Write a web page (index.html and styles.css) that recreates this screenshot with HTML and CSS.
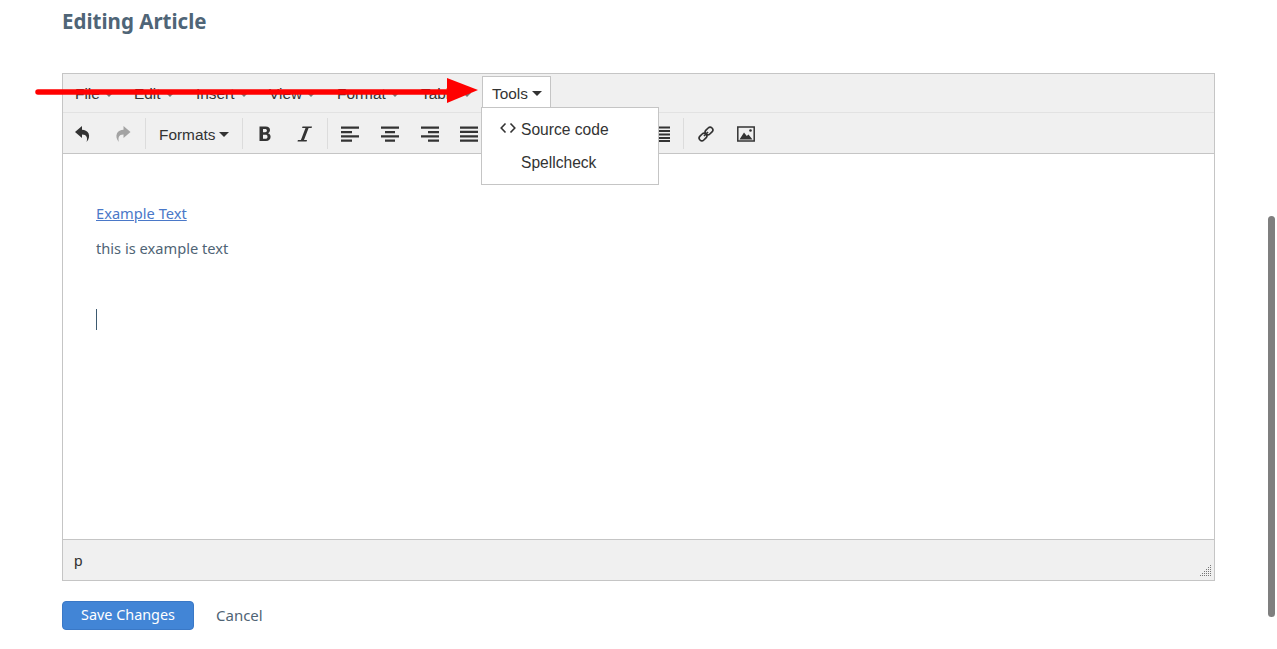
FILE: index.html
```html
<!DOCTYPE html>
<html lang="en">
<head>
<meta charset="utf-8">
<title>Editing Article</title>
<link rel="stylesheet" href="styles.css">
</head>
<body>
<main class="page">
  <h1 class="title">Editing Article</h1>
  <div class="editor">
    <div class="menubar">
      <span class="menu-item mi-file">File<i class="caret"></i></span>
      <span class="menu-item mi-edit">Edit<i class="caret"></i></span>
      <span class="menu-item mi-insert">Insert<i class="caret"></i></span>
      <span class="menu-item mi-view">View<i class="caret"></i></span>
      <span class="menu-item mi-format">Format<i class="caret"></i></span>
      <span class="menu-item mi-table">Table<i class="caret"></i></span>
      <span class="menu-item mi-tools">Tools<i class="caret dark"></i>
        <div class="dropdown">
          <div class="dd-row"><svg class="dd-icon" viewBox="0 0 16 12"><path d="M5.500 1.500 1.200 6l4.300 4.500M10.500 1.500 14.800 6l-4.300 4.500" fill="none" stroke="#333" stroke-width="1.600"/></svg><span>Source code</span></div>
          <div class="dd-row"><span class="dd-blank"></span><span>Spellcheck</span></div>
        </div>
      </span>
    </div>
    <div class="toolbar">
      <button class="tb"><svg viewBox="0 0 18 18"><path d="M8 1 1 7l7 6V9.500c2.500 0 4 .8 4.700 2.500.5 1.500.4 3.300-.2 5 2.500-2.500 3.300-6 2-8.800C13.200 6 10.800 4.800 8 4.700z" fill="#333"/></svg></button>
      <button class="tb"><svg viewBox="0 0 18 18"><path d="M9.500 1 16.500 7l-7 6V9.500c-2.500 0-4 .8-4.700 2.500-.5 1.500-.4 3.300.2 5-2.500-2.500-3.300-6-2-8.800C4.300 6 6.700 4.800 9.500 4.700z" fill="#a3a3a3"/></svg></button>
      <i class="sep"></i>
      <button class="tb-formats">Formats<i class="caret dark"></i></button>
      <i class="sep"></i>
      <button class="tb"><svg viewBox="0 0 18 18"><path fill-rule="evenodd" d="M3.500 1.500h6.300c2.700 0 4.200 1.400 4.200 3.600 0 1.500-.8 2.700-2.100 3.100 1.700.4 2.700 1.700 2.700 3.500 0 2.600-1.700 4.300-4.600 4.300H3.500zM7 4v3.300h2.100c1.200 0 1.800-.6 1.800-1.700S10.300 4 9.100 4zM7 9.700v4.100h2.400c1.400 0 2.100-.6 2.100-2.100S10.800 9.700 9.400 9.700z" fill="#333"/></svg></button>
      <button class="tb"><svg viewBox="0 0 18 18"><path d="M6.500 1.500h9.500l-.4 1.400h-3L8 15h3l-.4 1.500H1.500l.4-1.500h3L9.500 2.900h-3.400z" fill="#333"/></svg></button>
      <i class="sep"></i>
      <button class="tb"><svg viewBox="0 0 18 18"><path d="M0 1.500h18v2.300H0zM0 6h11v2.300H0zM0 10.200h18v2.300H0zM0 14.500h11v2.300H0z" fill="#333"/></svg></button>
      <button class="tb"><svg viewBox="0 0 18 18"><path d="M0 1.500h18v2.300H0zM4 6h10v2.300H4zM0 10.200h18v2.300H0zM4 14.500h10v2.300H4z" fill="#333"/></svg></button>
      <button class="tb tb-tight"><svg viewBox="0 0 18 18"><path d="M0 1.500h18v2.300H0zM7 6h11v2.300H7zM0 10.200h18v2.300H0zM7 14.500h11v2.300H7z" fill="#333"/></svg></button>
      <button class="tb"><svg viewBox="0 0 18 18"><path d="M0 1.500h18v2.300H0zM0 5.800h18v2.300H0zM0 10.200h18v2.300H0zM0 14.500h18v2.300H0z" fill="#333"/></svg></button>
      <i class="sep"></i>
      <button class="tb split"><svg viewBox="0 0 18 18"><path d="M0 2h18v2H0zM0 6h18v2H0zM0 10h18v2H0zM0 14h18v2H0z" fill="#333"/></svg></button>
      <button class="tb split-b"><svg viewBox="0 0 18 18"><path d="M0 2h18v2H0zM0 6h18v2H0zM0 10h18v2H0zM0 14h18v2H0z" fill="#333"/></svg></button>
      <i class="sep"></i>
      <button class="tb"><svg viewBox="0 0 18 18"><path d="M0 2h18v2H0zM0 6h18v2H0zM0 10h18v2H0zM0 14h18v2H0z" fill="#333"/></svg></button>
      <button class="tb"><svg viewBox="0 0 18 18"><path d="M0 1.500h18v2H0zM6 5h12v2H6zM6 8.500h12v2H6zM6 12h12v2H6zM6 15h12v2H6z" fill="#333"/></svg></button>
      <i class="sep"></i>
      <button class="tb"><svg viewBox="0 0 18 18"><g fill="none" stroke="#333" stroke-width="1.700" transform="rotate(-45 9 9)"><rect x="0.500" y="6.300" width="8.500" height="5.400" rx="2.700"/><rect x="9" y="6.300" width="8.500" height="5.400" rx="2.700"/></g><path d="M7 11 11 7" stroke="#333" stroke-width="1.700"/></svg></button>
      <button class="tb"><svg viewBox="0 0 18 16"><rect x="0.800" y="1" width="16.400" height="14" fill="none" stroke="#333" stroke-width="1.500"/><path d="M2.500 13.500 7 6.500l2.800 3.500 1.700-1.500 4 5z" fill="#333"/><circle cx="13.500" cy="4.500" r="1.300" fill="#333"/></svg></button>
    </div>
    <div class="content">
      <p class="para"><a class="link">Example Text</a></p>
      <p class="para">this is example text</p>
      <i class="cursor"></i>
    </div>
    <div class="statusbar">
      <span>p</span>
      <svg class="grip" viewBox="0 0 12 12"><g fill="#777"><rect x="10" y="0" width="1" height="1"/><rect x="10" y="2" width="1" height="1"/><rect x="10" y="4" width="1" height="1"/><rect x="10" y="6" width="1" height="1"/><rect x="10" y="8" width="1" height="1"/><rect x="10" y="10" width="1" height="1"/><rect x="8" y="2" width="1" height="1"/><rect x="8" y="4" width="1" height="1"/><rect x="8" y="6" width="1" height="1"/><rect x="8" y="8" width="1" height="1"/><rect x="8" y="10" width="1" height="1"/><rect x="6" y="4" width="1" height="1"/><rect x="6" y="6" width="1" height="1"/><rect x="6" y="8" width="1" height="1"/><rect x="6" y="10" width="1" height="1"/><rect x="4" y="6" width="1" height="1"/><rect x="4" y="8" width="1" height="1"/><rect x="4" y="10" width="1" height="1"/><rect x="2" y="8" width="1" height="1"/><rect x="2" y="10" width="1" height="1"/><rect x="0" y="10" width="1" height="1"/></g></svg>
    </div>
  </div>
  <div class="actions">
    <button class="save">Save Changes</button>
    <a class="cancel">Cancel</a>
  </div>
</main>
<svg class="arrow" viewBox="0 0 1277 649"><path d="M38 92H450" stroke="#f00" stroke-width="5.500" stroke-linecap="round"/><path d="M447 78 478 90 447 103z" fill="#f00"/></svg>
<div class="scroll-thumb"></div>
</body>
</html>
```
FILE: styles.css
```css
* { box-sizing: border-box; }
html, body { margin: 0; height: 649px; overflow: hidden; background: #fff; }
body { font-family: "Noto Sans", sans-serif; color: #4f6475; }
.page { padding: 0 62px; }
.title { margin: 0; padding-top: 7px; height: 73px; font-size: 20.500px; line-height: 28px; font-weight: 700; color: #4f6577; }
.editor { height: 508px; border: 1px solid #c5c5c5; display: flex; flex-direction: column; font-family: "Liberation Sans", sans-serif; color: #333; }
.menubar { height: 39px; background: #f0f0f0; border-bottom: 1px solid #e2e2e2; position: relative; font-size: 15.400px; }
.menu-item { position: absolute; top: 3px; height: 36px; line-height: 34px; white-space: nowrap; color: #333; }
.mi-file { left: 12px; } .mi-edit { left: 71px; } .mi-insert { left: 133px; } .mi-view { left: 206px; } .mi-format { left: 274px; } .mi-table { left: 358px; }
.mi-tools { top: 2px; height: 37px; left: 419px; width: 69px; padding-left: 9px; background: #fff; border: 1px solid #c5c5c5; border-bottom: 0; line-height: 33px; z-index: 2; }
.caret { display: inline-block; width: 0; height: 0; margin-left: 5px; vertical-align: 2px; border-left: 4.500px solid transparent; border-right: 4.500px solid transparent; border-top: 4.500px solid #777; }
.caret.dark { border-top-color: #333; margin-left: 4px; vertical-align: 3px; border-left-width: 5px; border-right-width: 5px; border-top-width: 5px; }
.dropdown { position: absolute; top: 30px; left: -2px; width: 178px; height: 78px; background: #fff; border: 1px solid #c5c5c5; padding-top: 5px; line-height: 33px; font-size: 15.600px; }
.dd-row { display: flex; align-items: center; height: 33px; padding-left: 18px; color: #333; }
.dd-icon { width: 16px; height: 12px; margin-right: 5px; margin-top: -3px; }
.dd-blank { width: 21px; }
.toolbar { height: 41px; background: #f0f0f0; border-bottom: 1px solid #c5c5c5; display: flex; align-items: center; }
.tb { width: 40px; height: 32px; padding: 2px 0 0; border: 0; background: none; display: flex; align-items: center; justify-content: center; flex: none; }
.tb.tb-tight { width: 39px; }
.tb.split { width: 52px; }
.tb.split-b { width: 50px; }
.tb svg { width: 18px; height: 18px; }
.sep { width: 1px; height: 31px; margin: 0 2px; background: #dcdcdc; flex: none; }
.tb-formats { width: 92px; height: 32px; padding: 4px 0 0 11px; border: 0; background: none; font: 15.400px "Liberation Sans", sans-serif; color: #333; text-align: left; white-space: nowrap; flex: none; }
.content { flex: 1; background: #fff; padding: 49px 33px 0; font-family: "Noto Sans", sans-serif; font-size: 14.650px; color: #4f6475; position: relative; }
.para { margin: 0 0 14px; line-height: 21px; }
.link { color: #4a78c8; text-decoration: underline; }
.cursor { position: absolute; left: 33px; top: 155px; width: 1px; height: 21px; background: #3d5a70; }
.statusbar { height: 41px; background: #f0f0f0; border-top: 1px solid #c5c5c5; padding: 1px 11px 0; font-size: 15.400px; line-height: 40px; color: #333; position: relative; }
.grip { position: absolute; right: 2px; bottom: 3px; width: 12px; height: 12px; }
.actions { margin-top: 20px; display: flex; align-items: center; }
.save { width: 132px; height: 29px; padding: 0 0 2px; background: #4285d6; border: 1px solid #3a78c6; border-radius: 4px; color: #fff; font: 14.400px "Noto Sans", sans-serif; }
.cancel { margin-left: 22px; font-size: 15px; color: #4f6475; padding-bottom: 2px; }
.arrow { position: absolute; left: 0; top: 0; width: 1277px; height: 649px; pointer-events: none; z-index: 5; }
.scroll-thumb { position: absolute; left: 1268px; top: 216px; width: 7px; height: 401px; background: #7f7f7f; border-radius: 4px; }
```
